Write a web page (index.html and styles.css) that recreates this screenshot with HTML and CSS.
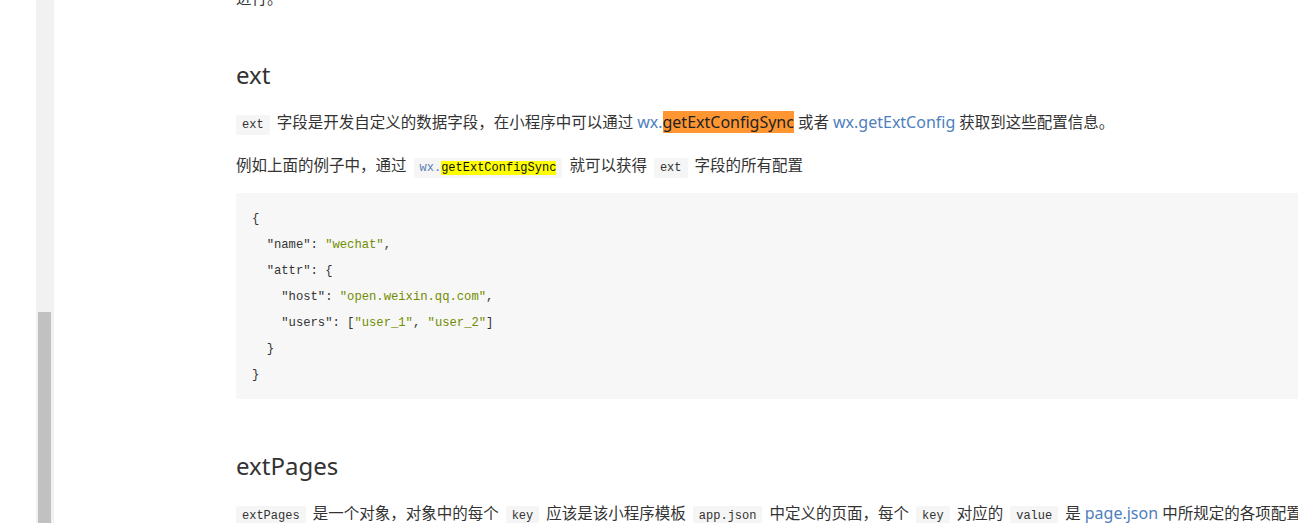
FILE: index.html
```html
<!DOCTYPE html>
<html lang="zh">
<head>
<meta charset="utf-8">
<title>ext</title>
<link rel="stylesheet" href="styles.css">
</head>
<body>
<div class="page">
  <div class="gutter"></div>
  <div class="scrollbar"><div class="thumb"></div></div>
  <main class="content">
    <p class="lead">进行。</p>
    <h2 class="h-first">ext</h2>
    <p class="p1"><code class="first">ext</code> 字段是开发自定义的数据字段，在小程序中可以通过 <a class="link">wx.<span class="hl-active">getExtConfigSync</span></a> 或者 <a class="link">wx.getExtConfig</a> 获取到这些配置信息。</p>
    <p class="p2">例如上面的例子中，通过 <code><span class="c-blue">wx.</span><span class="hl">getExtConfigSync</span></code> 就可以获得 <code>ext</code> 字段的所有配置</p>
<pre class="codeblock">{
  "name": <span class="s">"wechat"</span>,
  "attr": {
    "host": <span class="s">"open.weixin.qq.com"</span>,
    "users": [<span class="s">"user_1"</span>, <span class="s">"user_2"</span>]
  }
}</pre>
    <h2 class="h-second">extPages</h2>
    <p class="p3"><code class="first">extPages</code> 是一个对象，对象中的每个 <code>key</code> 应该是该小程序模板 <code>app.json</code> 中定义的页面，每个 <code>key</code> 对应的 <code>value</code> 是 <a class="link">page.json</a> 中所规定的各项配置</p>
  </main>
</div>
</body>
</html>
```

FILE: styles.css
```css
html, body {
  margin: 0;
  padding: 0;
  background: #ffffff;
  overflow: hidden;
  height: 523px;
}
body {
  font-family: "Noto Sans", "Noto Sans CJK SC", sans-serif;
  color: #333333;
}
.page {
  display: flex;
  height: 523px;
}
.gutter {
  width: 36px;
  flex: none;
}
.scrollbar {
  width: 18px;
  flex: none;
  background: #f1f1f1;
  display: flex;
  flex-direction: column;
  padding-top: 312px;
  box-sizing: border-box;
}
.thumb {
  flex: 1;
  margin: 0 3px 0 2px;
  background: #c1c1c1;
}
.content {
  flex: 1;
  min-width: 0;
  padding-left: 182px;
  display: flex;
  flex-direction: column;
}
p {
  font-size: 15.5px;
  line-height: 26px;
  height: 26px;
  margin: 0;
  white-space: nowrap;
  flex: none;
}
.lead {
  margin-top: -15px;
}
h2 {
  font-weight: 400;
  font-size: 24px;
  line-height: 32px;
  height: 32px;
  margin: 0;
  color: #333333;
  flex: none;
}
.h-first {
  margin-top: 48px;
}
.p1 {
  margin-top: 18px;
}
.p2 {
  margin-top: 17px;
}
.h-second {
  margin-top: 51px;
}
.p3 {
  margin-top: 18px;
}
code {
  font-family: "Liberation Mono", "DejaVu Sans Mono", monospace;
  font-size: 12px;
  background: #f5f5f5;
  padding: 3px 6px;
  margin: 0 3px;
  color: #333333;
  border-radius: 2px;
}
code.first {
  margin-left: 0;
}
.link {
  color: #4e7fbd;
  font-size: 16px;
}
.hl-active {
  background: #ff9632;
  color: #222222;
}
.hl {
  background: #ffff00;
  color: #111111;
}
.c-blue {
  color: #5a7fb5;
}
.codeblock {
  margin: 15px 0 0 0;
  background: #f7f7f7;
  padding: 13px 16px 11px;
  font-family: "Liberation Mono", "DejaVu Sans Mono", monospace;
  font-size: 12.2px;
  line-height: 26px;
  height: 182px;
  color: #333333;
  flex: none;
  overflow: hidden;
}
.s {
  color: #718c00;
}
```
